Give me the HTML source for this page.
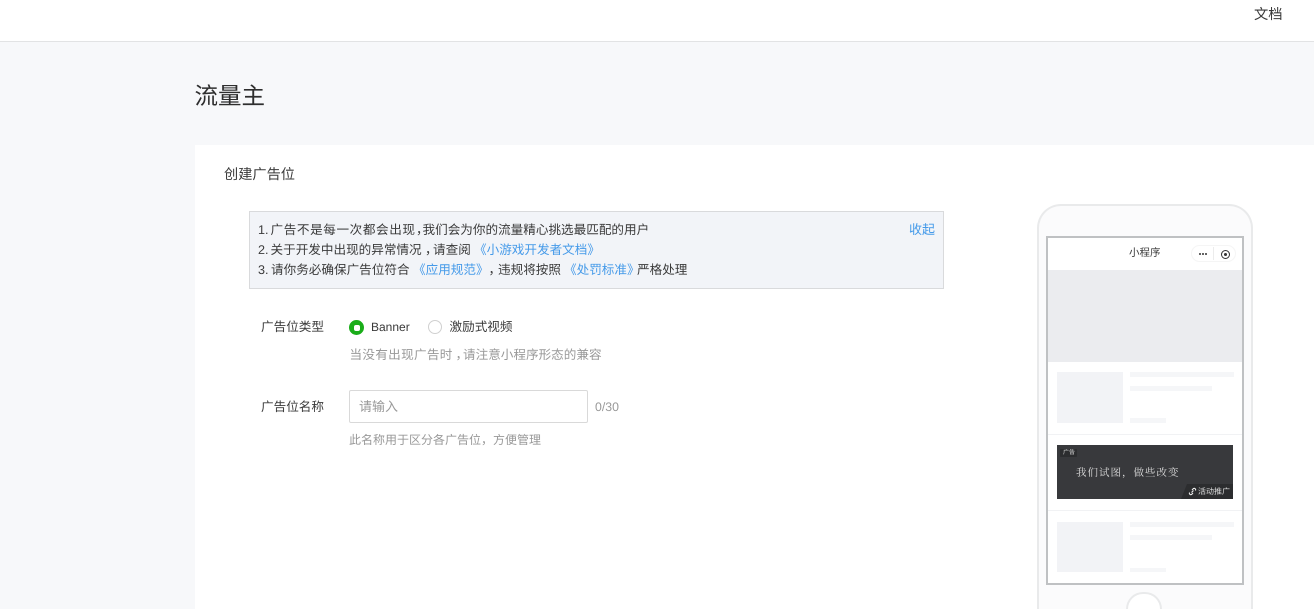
<!DOCTYPE html>
<html lang="zh-CN">
<head>
<meta charset="utf-8">
<title>流量主</title>
<style>
html,body{margin:0;padding:0;width:1314px;height:609px;overflow:hidden;background:#f7f8fa;}
body{position:relative;font-family:"Liberation Sans","Noto Sans CJK SC",sans-serif;font-size:12.6px;color:#3a3a3a;text-rendering:geometricPrecision;}
.a{position:absolute;white-space:nowrap;}
.b{position:absolute;box-sizing:border-box;}
a{color:#459ae9;text-decoration:none;}
.g{background:#f2f3f6;position:absolute;}
.l{background:#f5f6f8;position:absolute;}
.r1,.r2,.r3{position:absolute;white-space:nowrap;line-height:20px;}
.r1{top:220px;}.r2{top:240px;}.r3{top:260px;}
</style>
</head>
<body>
<div class="b" style="left:0;top:0;width:1314px;height:42px;background:#fff;border-bottom:1px solid #e2e3e4;"></div>
<div class="a" style="left:1254px;top:6px;font-size:14.3px;line-height:18px;">文档</div>
<div class="a" style="left:194.500px;top:79px;font-size:23.5px;line-height:34px;color:#2e2e2e;">流量主</div>
<div class="b" style="left:195px;top:145px;width:1119px;height:464px;background:#fff;"></div>
<div class="a" style="left:224px;top:166px;font-size:14.2px;line-height:18px;">创建广告位</div>

<div class="b" style="left:249px;top:211px;width:695px;height:78px;background:#f2f4f8;border:1px solid #d9dadc;"></div>

<div class="r1" style="left:258px;">1.</div>
<div class="r1" style="left:270.500px;letter-spacing:.6px;">广告不是每一次都会出现</div>
<div class="r1" style="left:416px;">，</div>
<div class="r1" style="left:422.500px;">我们会为你的流量精心挑选最匹配的用户</div>

<div class="r2" style="left:258px;">2.</div>
<div class="r2" style="left:270.500px;">关于开发中出现的异常情况</div>
<div class="r2" style="left:425px;">，</div>
<div class="r2" style="left:433px;">请查阅</div>
<div class="r2" style="left:474px;"><a>《小游戏开发者文档》</a></div>

<div class="r3" style="left:258px;">3.</div>
<div class="r3" style="left:271px;">请你务必确保广告位符合</div>
<div class="r3" style="left:413px;"><a>《应用规范》</a></div>
<div class="r3" style="left:488.500px;">，</div>
<div class="r3" style="left:498px;">违规将按照</div>
<div class="r3" style="left:564px;"><a>《处罚标准》</a></div>
<div class="r3" style="left:637px;">严格处理</div>

<div class="a" style="left:909px;top:220px;font-size:13px;line-height:20px;color:#459ae9;">收起</div>

<div class="a" style="left:261px;top:317px;line-height:20px;">广告位类型</div>
<div class="b" style="left:349px;top:320px;width:15px;height:15px;border-radius:50%;background:#1aad19;"></div>
<div class="b" style="left:353.500px;top:324.500px;width:6px;height:6px;background:#fff;border-radius:2px;"></div>
<div class="a" style="left:371px;top:318px;font-size:12px;line-height:18px;">Banner</div>
<div class="b" style="left:428px;top:320px;width:14px;height:14px;border-radius:50%;border:1px solid #d0d0d0;background:#fff;"></div>
<div class="a" style="left:449.500px;top:318px;line-height:18px;">激励式视频</div>

<div class="a" style="left:349.500px;top:345px;line-height:20px;color:#999;letter-spacing:.3px;">当没有出现广告时</div>
<div class="a" style="left:455.500px;top:345px;line-height:20px;color:#999;">，</div>
<div class="a" style="left:463px;top:345px;line-height:20px;color:#999;">请注意小程序形态的兼容</div>

<div class="a" style="left:261px;top:397px;line-height:20px;">广告位名称</div>
<div class="b" style="left:349px;top:390px;width:239px;height:33px;border:1px solid #d9d9d9;border-radius:2px;background:#fff;"></div>
<div class="a" style="left:359px;top:397px;font-size:13px;line-height:20px;color:#999;">请输入</div>
<div class="a" style="left:595px;top:397px;font-size:12.3px;line-height:20px;color:#999;">0/30</div>
<div class="a" style="left:349px;top:430px;font-size:12px;line-height:20px;color:#999;">此名称用于区分各广告位，方便管理</div>

<!-- phone -->
<div class="b" style="left:1037px;top:204px;width:216px;height:405px;border:2px solid #e9eaeb;border-bottom:none;border-radius:24px 24px 0 0;background:#fbfbfc;"></div>
<div class="b" style="left:1046px;top:236px;width:198px;height:349px;border:2px solid #bfc1c3;background:#fff;"></div>
<div class="a" style="left:1129px;top:245px;font-size:10.5px;line-height:16px;">小程序</div>
<div class="b" style="left:1191px;top:245px;width:45px;height:17px;border:1px solid #f5f5f5;border-radius:9px;background:#fff;"></div>
<div class="b" style="left:1213px;top:247px;width:1px;height:13px;background:#ececec;"></div>
<div class="b" style="left:1199px;top:253px;width:2px;height:2px;background:#333;border-radius:50%;box-shadow:3px 0 0 #333,6px 0 0 #333;"></div>
<div class="b" style="left:1220.500px;top:249.500px;width:9px;height:9px;border:1px solid #333;border-radius:50%;"></div>
<div class="b" style="left:1223.500px;top:252.500px;width:3px;height:3px;background:#333;border-radius:50%;"></div>
<div class="b" style="left:1048px;top:270px;width:194px;height:92px;background:#ebecef;"></div>

<div class="g" style="left:1057px;top:372px;width:66px;height:51px;"></div>
<div class="l" style="left:1130px;top:372px;width:104px;height:5px;"></div>
<div class="l" style="left:1130px;top:386px;width:82px;height:5px;"></div>
<div class="l" style="left:1130px;top:418px;width:36px;height:5px;"></div>
<div class="b" style="left:1048px;top:434px;width:194px;height:1px;background:#f1f2f4;"></div>

<div class="b" style="left:1057px;top:445px;width:176px;height:54px;background:#38393c;overflow:hidden;"></div>
<div class="b" style="left:1060px;top:449px;width:17px;height:8px;background:#2c2d2f;border-radius:1px;"></div>
<div class="a" style="left:1063px;top:449px;font-size:6px;line-height:8px;color:#ddd;">广告</div>
<div class="a" style="left:1076px;top:465px;font-family:'Noto Serif CJK SC',serif;font-size:10.5px;line-height:16px;letter-spacing:1px;color:#dcdcdc;">我们试图，做些改变</div>
<div class="b" style="left:1181px;top:484px;width:52px;height:15px;background:#2c2d2f;clip-path:polygon(6px 0,100% 0,100% 100%,0 100%);"></div>
<svg class="b" style="left:1188px;top:487px;" width="9" height="9" viewBox="0 0 9 9"><path d="M1.500 5.500a1.500 1.500 0 0 0 2 2l1.500-1.500M7.500 3.500a1.500 1.500 0 0 0-2-2L4 3M3.500 5.500l2-2" fill="none" stroke="#eee" stroke-width="1.100"/></svg>
<div class="a" style="left:1198px;top:487px;font-size:8px;line-height:10px;color:#ddd;">活动推广</div>
<div class="b" style="left:1048px;top:510px;width:194px;height:1px;background:#f1f2f4;"></div>

<div class="g" style="left:1057px;top:522px;width:66px;height:50px;"></div>
<div class="l" style="left:1130px;top:522px;width:104px;height:5px;"></div>
<div class="l" style="left:1130px;top:535px;width:82px;height:5px;"></div>
<div class="l" style="left:1130px;top:568px;width:36px;height:4px;"></div>

<div class="b" style="left:1126px;top:592px;width:36px;height:17px;border:2px solid #e9eaeb;border-bottom:none;border-radius:18px 18px 0 0;background:#fff;"></div>
</body>
</html>
